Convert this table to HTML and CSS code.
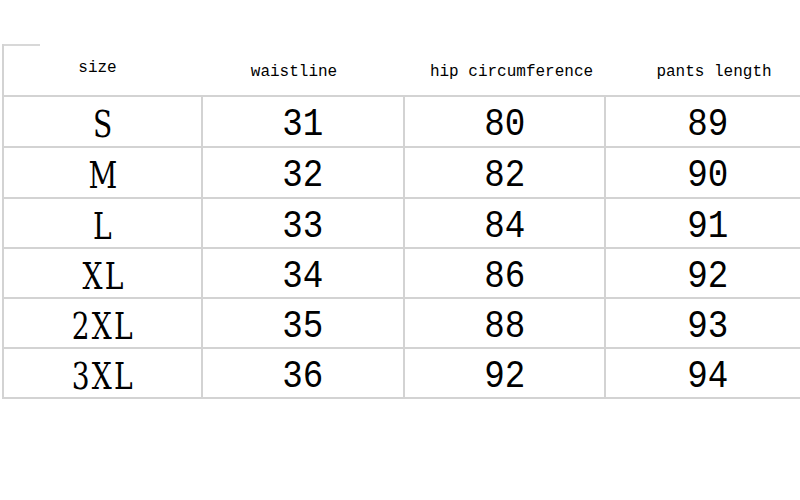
FILE: index.html
```html
<!DOCTYPE html>
<html>
<head>
<meta charset="utf-8">
<link rel="stylesheet" href="styles.css">
</head>
<body>
<div class="chart">
  <div class="corner"></div>
  <div class="head">
    <div class="hcell h-size">size</div>
    <div class="hcell h-waist">waistline</div>
    <div class="hcell h-hip">hip circumference</div>
    <div class="hcell h-len">pants length</div>
  </div>
  <div class="rows">
    <div class="row tall"><div class="cell label"><span>S</span></div><div class="cell"><span>31</span></div><div class="cell"><span>80</span></div><div class="cell last"><span>89</span></div></div>
    <div class="row tall"><div class="cell label"><span>M</span></div><div class="cell"><span>32</span></div><div class="cell"><span>82</span></div><div class="cell last"><span>90</span></div></div>
    <div class="row"><div class="cell label"><span>L</span></div><div class="cell"><span>33</span></div><div class="cell"><span>84</span></div><div class="cell last"><span>91</span></div></div>
    <div class="row"><div class="cell label"><span>XL</span></div><div class="cell"><span>34</span></div><div class="cell"><span>86</span></div><div class="cell last"><span>92</span></div></div>
    <div class="row"><div class="cell label"><span>2XL</span></div><div class="cell"><span>35</span></div><div class="cell"><span>88</span></div><div class="cell last"><span>93</span></div></div>
    <div class="row"><div class="cell label"><span>3XL</span></div><div class="cell"><span>36</span></div><div class="cell"><span>92</span></div><div class="cell last"><span>94</span></div></div>
  </div>
</div>
</body>
</html>
```
FILE: styles.css
```css
html, body {
  margin: 0;
  padding: 0;
  background: #ffffff;
  width: 800px;
  height: 500px;
  overflow: hidden;
}

.chart {
  margin: 44px 0 0 2px;
  border-left: 2px solid #d3d3d3;
  font-family: "Liberation Mono", "DejaVu Sans Mono", monospace;
  color: #000;
}

.corner {
  width: 36px;
  height: 2px;
  background: #d8d8d8;
}

.head {
  display: grid;
  grid-template-columns: 199px 202px 201px 1fr;
  height: 49px;
  border-bottom: 2px solid #d3d3d3;
  font-size: 16px;
  line-height: 16px;
}

.hcell {
  text-align: center;
  padding-top: 18px;
}

.h-size { padding-top: 14px; padding-right: 12px; }
.h-waist { padding-right: 20px; }
.h-hip { padding-left: 12px; }
.h-len { padding-left: 22px; }

.row {
  display: grid;
  grid-template-columns: 199px 202px 201px 1fr;
  height: 50px;
  border-bottom: 2px solid #d3d3d3;
  box-sizing: border-box;
}

.row.tall {
  height: 51px;
}

.cell {
  border-right: 2px solid #d3d3d3;
  display: flex;
  align-items: center;
  justify-content: center;
  padding-top: 7px;
  font-size: 38px;
  line-height: 36px;
}

.cell span {
  display: inline-block;
  transform: scaleX(0.9);
}

.cell.label {
  font-family: "DejaVu Serif", "Liberation Serif", serif;
  font-size: 37px;
}

.cell.label span {
  transform: scaleX(0.76);
  letter-spacing: 3px;
  padding-left: 3px;
}

.cell.last {
  border-right: none;
  padding-left: 10px;
}
```
